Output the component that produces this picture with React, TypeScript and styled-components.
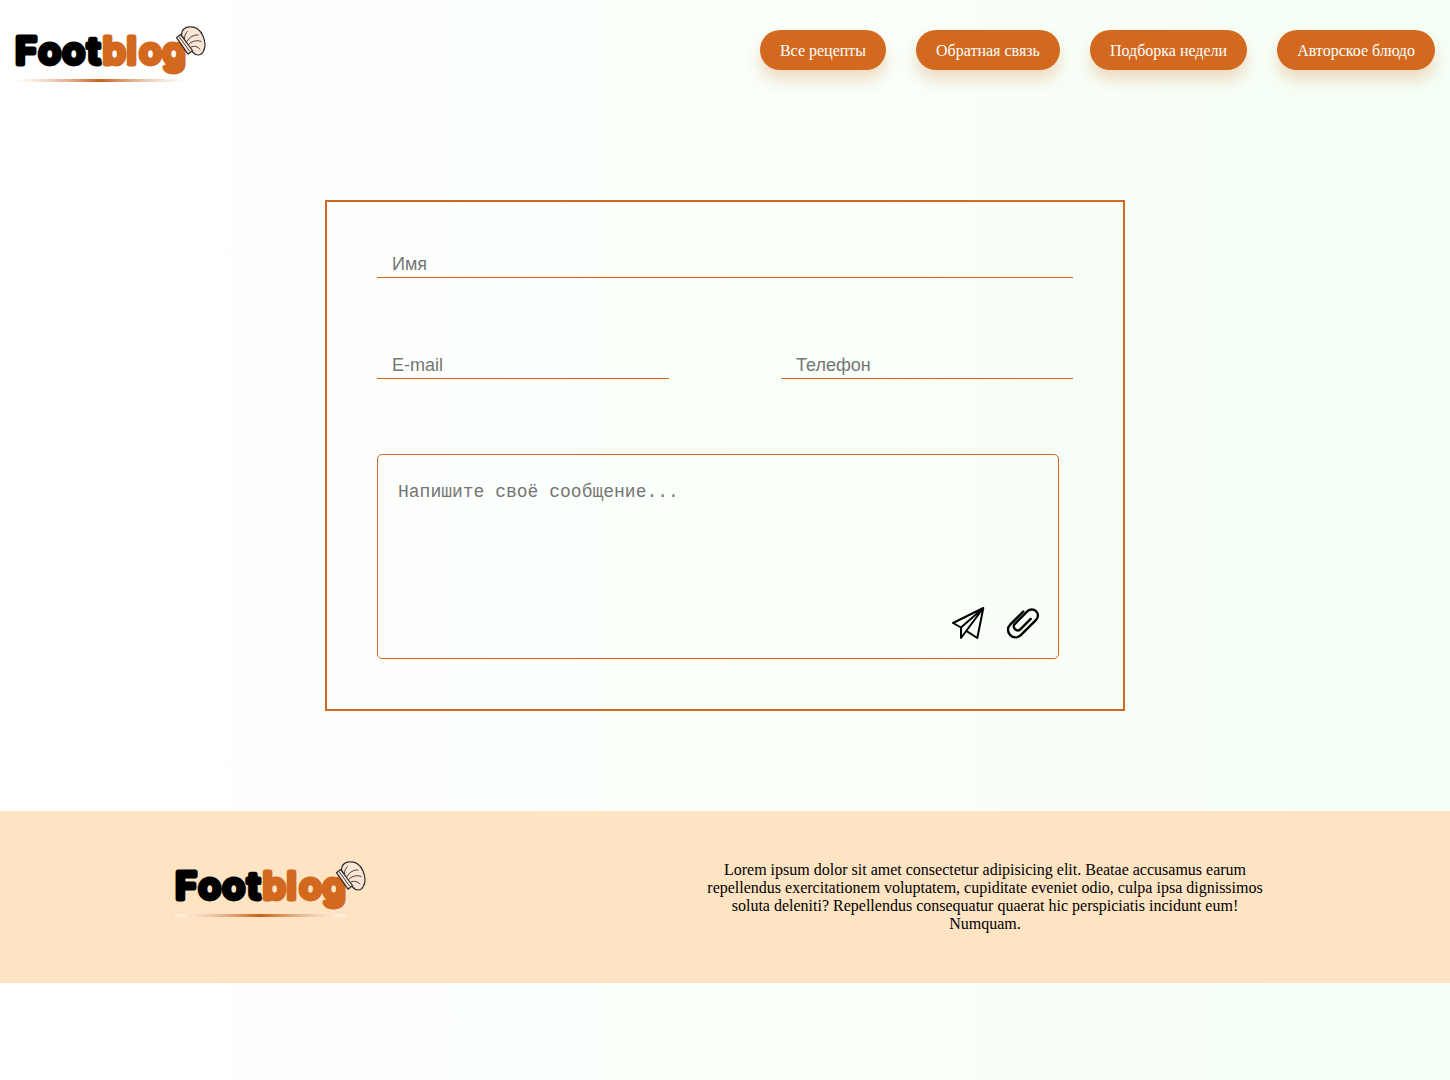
import React from "react";
import styled, { createGlobalStyle } from "styled-components";

const ORANGE = "chocolate";

const GlobalStyle = createGlobalStyle`
  * { box-sizing: border-box; }
  html { min-height: 100%; background: linear-gradient(to right, #ffffff, #f5fff5); }
  body { margin: 0; font-family: "Liberation Serif", "Times New Roman", serif; font-size: 16px; color: #000; }
`;

const Header = styled.header`
  display: flex;
  justify-content: space-between;
  align-items: flex-start;
  height: 100px;
  padding: 20px 15px 0;
`;

const Nav = styled.nav`
  display: flex;
  gap: 30px;
  margin-top: 10px;
`;

const NavLink = styled.a`
  display: flex;
  align-items: center;
  height: 40px;
  padding: 2px 20px 0;
  border-radius: 20px;
  background: ${ORANGE};
  color: #fff;
  white-space: nowrap;
  box-shadow: 0 10px 15px rgba(210, 105, 30, 0.24);
`;

const LogoSvg = styled.svg`
  display: block;
  flex: none;
  overflow: visible;
`;

const LogoText = styled.text`
  font-family: Inter, "Liberation Sans", sans-serif;
  font-weight: 600;
  font-size: 37px;
  stroke-width: 4.8px;
  stroke-linejoin: round;
`;

const Form = styled.form`
  width: 800px;
  height: 511px;
  margin: 100px auto;
  padding: 50px;
  border: 2px solid ${ORANGE};
`;

const FieldRow = styled.div`
  display: flex;
  justify-content: space-between;
  margin-bottom: 75px;
`;

const Field = styled.input<{ $width: string }>`
  display: block;
  width: ${(p) => p.$width};
  height: 26px;
  padding: 1px 15px;
  border: 0;
  border-bottom: 1px solid ${ORANGE};
  background: transparent;
  font: 18px "Liberation Sans", Arial, sans-serif;
  outline: none;
  &::placeholder { color: #757575; }
`;

const MessageBox = styled.div`
  display: flex;
  flex-direction: column;
  width: 682px;
  height: 205px;
  border: 1px solid ${ORANGE};
  border-radius: 5px;
`;

const Message = styled.textarea`
  flex: 1;
  padding: 27px 20px 0;
  border: 0;
  background: transparent;
  resize: none;
  outline: none;
  font: 18px "Liberation Mono", "Courier New", monospace;
  &::placeholder { color: #757575; }
`;

const Actions = styled.div`
  display: flex;
  justify-content: flex-end;
  gap: 23px;
  padding: 0 19px 19px 0;
`;

const Icon = styled.svg`
  display: block;
  width: 32px;
  height: 32px;
  fill: none;
  stroke: #000;
  overflow: visible;
`;

const Footer = styled.footer`
  display: flex;
  height: 172px;
  padding: 44px 175px 0;
  justify-content: space-between;
  background: #ffe4c4;
`;

const FooterText = styled.p`
  width: 580px;
  margin: 6px 0 0;
  text-align: center;
  line-height: 18px;
`;

function Logo({ id }: { id: string }) {
  return (
    <LogoSvg width="192" height="64" viewBox="0 0 192 64">
      <defs>
        <linearGradient id={id}>
          <stop offset="0" stopColor="#fff" stopOpacity="0.5" />
          <stop offset="0.5" stopColor="#c8601a" />
          <stop offset="1" stopColor="#fff" stopOpacity="0.5" />
        </linearGradient>
      </defs>
      <LogoText y="43.700" x="0.3 23.4 47.6 72.3" fill="#000" stroke="#000">Foot</LogoText>
      <LogoText y="43.700" x="87.700 111.800 124.3 147.6" fill={ORANGE} stroke={ORANGE}>blog</LogoText>
      <rect x="0" y="59" width="171" height="3" fill={`url(#${id})`} />
      <g transform="translate(-0.5 0)" fill="#fbe6d6" stroke="#2b2b2b" strokeWidth="1.2" strokeLinejoin="round" strokeLinecap="round">
        <path d="M167 15C167 9.500 171 6.500 176 7C181 6.500 186 10 188.500 16C191 22 191 28 188.500 32C186 36 181.500 36 178 32Z" />
        <path d="M162 17.700L166 14.500L178 30.500L173.500 34.200Z" />
        <path d="M170 18.500C170 15.500 171 13 173 11.500M172.500 21.500C175 17 179.500 14.500 183.500 15M174.500 24C178.500 20.500 183 20 186.500 21.500M176.500 27C180 25.500 183 26.500 185.500 29M165 17.200L175 31" fill="none" strokeWidth="0.9" />
      </g>
    </LogoSvg>
  );
}

export default function App() {
  return (
    <>
      <GlobalStyle />
      <Header>
        <Logo id="headerLine" />
        <Nav>
          <NavLink>Все рецепты</NavLink>
          <NavLink>Обратная связь</NavLink>
          <NavLink>Подборка недели</NavLink>
          <NavLink>Авторское блюдо</NavLink>
        </Nav>
      </Header>
      <Form>
        <FieldRow>
          <Field $width="100%" placeholder="Имя" />
        </FieldRow>
        <FieldRow>
          <Field $width="292px" placeholder="E-mail" />
          <Field $width="292px" placeholder="Телефон" />
        </FieldRow>
        <MessageBox>
          <Message placeholder="Напишите своё сообщение..." />
          <Actions>
            <Icon viewBox="0 0 32 32" strokeWidth="2" strokeLinejoin="round">
              <path d="M31.300 1L1 16L9 20.500L31.300 1L25.300 31L14.700 24.200M9 20.500V31L31.300 1" />
            </Icon>
            <Icon viewBox="0 0 32 32" strokeWidth="2.4" strokeLinecap="round">
              <path d="M16.300 4.500L3.200 17.600A7.450 7.450 0 0 0 13.800 28.200L29.100 12.900A6.100 6.100 0 0 0 20.500 4.200L7.700 17.100A3.850 3.850 0 0 0 13.100 22.500L23.700 11.900" />
            </Icon>
          </Actions>
        </MessageBox>
      </Form>
      <Footer>
        <Logo id="footerLine" />
        <FooterText>
          Lorem ipsum dolor sit amet consectetur adipisicing elit. Beatae accusamus earum repellendus exercitationem voluptatem, cupiditate eveniet odio, culpa ipsa dignissimos soluta deleniti? Repellendus consequatur quaerat hic perspiciatis incidunt eum! Numquam.
        </FooterText>
      </Footer>
    </>
  );
}
